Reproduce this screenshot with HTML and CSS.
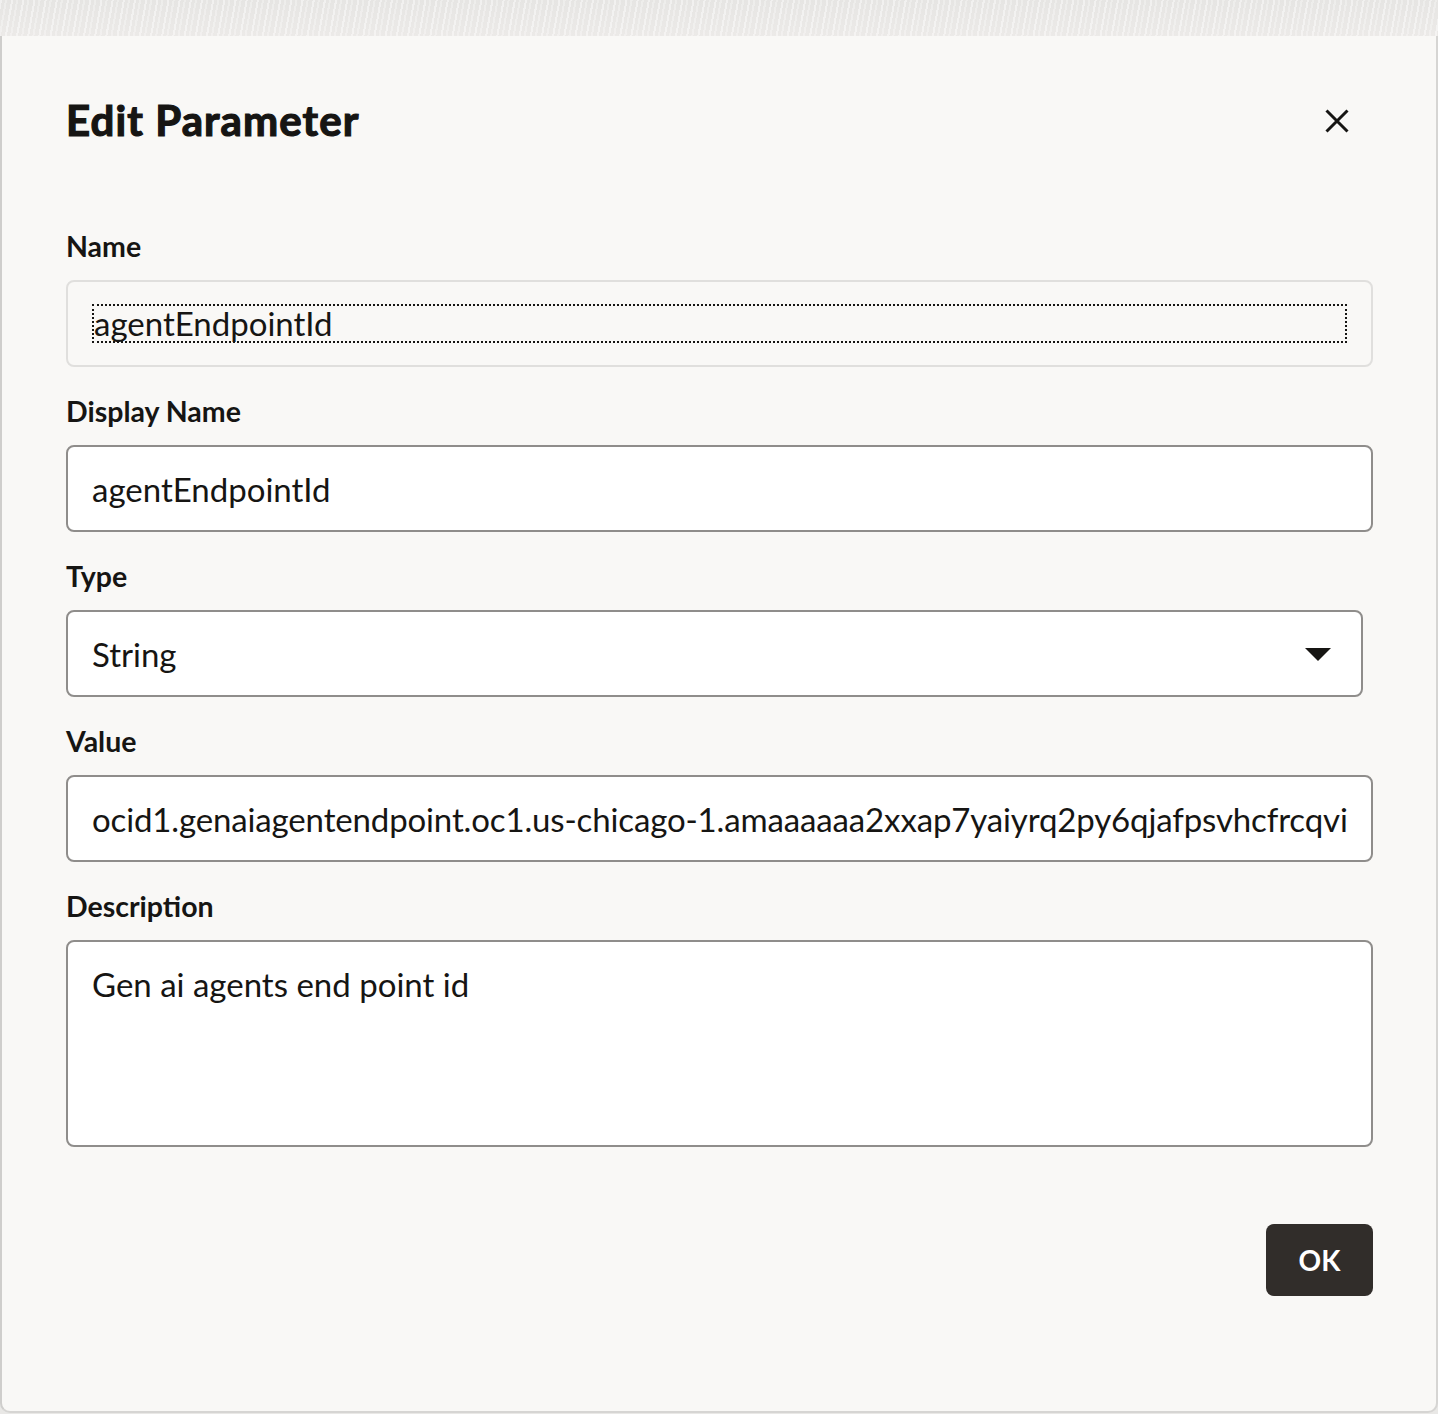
FILE: index.html
```html
<!DOCTYPE html>
<html lang="en">
<head>
<meta charset="utf-8">
<title>Edit Parameter</title>
<link rel="stylesheet" href="styles.css">
</head>
<body>
<div class="backdrop"></div>
<div class="dialog">
  <div class="dialog-header">
    <h1 class="dialog-title">Edit Parameter</h1>
    <button class="close-btn" aria-label="Close">
      <svg width="24" height="24" viewBox="0 0 24 24"><path d="M1.5 1.5 L22.5 22.5 M22.5 1.5 L1.5 22.5" stroke="#161513" stroke-width="3" fill="none"/></svg>
    </button>
  </div>
  <div class="form">
    <div class="field">
      <div class="label">Name</div>
      <div class="input readonly"><span class="focus-ring">agentEndpointId</span></div>
    </div>
    <div class="field">
      <div class="label">Display Name</div>
      <div class="input"><span class="text">agentEndpointId</span></div>
    </div>
    <div class="field">
      <div class="label">Type</div>
      <div class="input select">
        <span class="text">String</span>
        <svg class="caret" width="26" height="13" viewBox="0 0 26 13"><path d="M0 0 L26 0 L13 13 Z" fill="#161513"/></svg>
      </div>
    </div>
    <div class="field">
      <div class="label">Value</div>
      <div class="input"><span class="text long">ocid1.genaiagentendpoint.oc1.us-chicago-1.amaaaaaa2xxap7yaiyrq2py6qjafpsvhcfrcqvi</span></div>
    </div>
    <div class="field">
      <div class="label">Description</div>
      <div class="input textarea"><span class="text">Gen ai agents end point id</span></div>
    </div>
  </div>
  <div class="footer">
    <button class="ok-btn">OK</button>
  </div>
</div>
</body>
</html>
```

FILE: styles.css
```css
* { box-sizing: border-box; }
html, body {
  margin: 0;
  padding: 0;
}
body {
  width: 1438px;
  height: 1414px;
  background: #e9e8e6;
  font-family: "Lato", "Noto Sans", sans-serif;
  color: #161513;
  display: flex;
  flex-direction: column;
  overflow: hidden;
}
.backdrop {
  height: 36px;
  flex: none;
  background:
    repeating-linear-gradient(100deg, rgba(255,255,255,0.45) 0 2px, rgba(255,255,255,0) 2px 5px, rgba(255,255,255,0.3) 5px 7px, rgba(255,255,255,0) 7px 11px),
    linear-gradient(180deg, #e6e5e3 0%, #eceae8 100%);
}
.dialog {
  height: 1377px;
  flex: none;
  background: #f9f8f6;
  border-left: 2px solid #cfcecc;
  border-right: 2px solid #d6d5d3;
  border-bottom: 2px solid #d6d5d3;
  border-radius: 0 0 10px 10px;
  padding: 0 63px 0 64px;
  display: flex;
  flex-direction: column;
}
.dialog-header {
  display: flex;
  align-items: flex-start;
  justify-content: space-between;
  height: 193px;
  flex: none;
}
.dialog-title {
  margin: 60px 0 0 0;
  font-size: 42px;
  font-weight: 700;
  line-height: 48px;
  -webkit-text-stroke: 1.2px #161513;
  letter-spacing: 1.1px;
}
.close-btn {
  background: none;
  border: none;
  padding: 0;
  width: 24px;
  height: 24px;
  margin: 73px 24px 0 0;
  display: flex;
}
.form {
  display: flex;
  flex-direction: column;
  gap: 27px;
}
.field {
  display: flex;
  flex-direction: column;
}
.label {
  font-size: 28.5px;
  font-weight: 700;
  line-height: 34px;
  margin-bottom: 17px;
}
.input {
  height: 87px;
  border: 2px solid #8f8d8b;
  border-radius: 8px;
  background: #ffffff;
  padding: 0 24px;
  display: flex;
  align-items: center;
  font-size: 33px;
  line-height: 40px;
  white-space: nowrap;
}
.text {
  flex: 1;
  min-width: 0;
  white-space: nowrap;
}
.text.long {
  letter-spacing: -0.14px;
}
.input.readonly {
  background: #f9f8f6;
  border-color: #e0dfdd;
}
.focus-ring {
  flex: 1;
  border: 2px dotted #161513;
  height: 39px;
  line-height: 35px;
}
.input.select {
  width: calc(100% - 10px);
  padding-right: 30px;
}
.caret { display: block; margin-top: 2px; flex: none; }
.input.textarea {
  height: 207px;
  align-items: flex-start;
  padding-top: 22px;
}
.footer {
  display: flex;
  justify-content: flex-end;
  margin-top: 77px;
}
.ok-btn {
  width: 107px;
  height: 72px;
  background: #312d2a;
  color: #ffffff;
  border: none;
  border-radius: 8px;
  font-family: "Lato", "Noto Sans", sans-serif;
  font-size: 28px;
  font-weight: 700;
}
```
